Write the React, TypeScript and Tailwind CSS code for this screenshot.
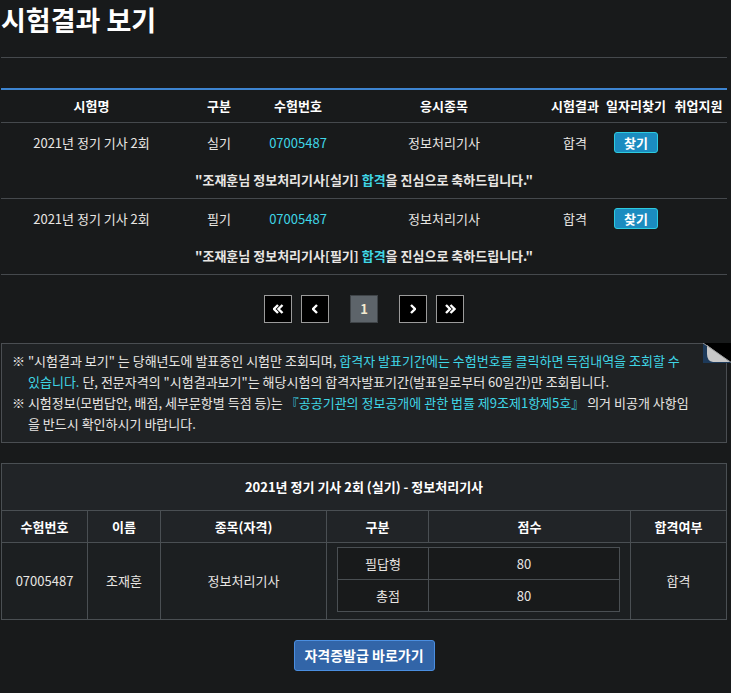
import React from "react";

const CYAN = "text-[#3fd6e6]";

function Chevron({ dir, double }: { dir: "l" | "r"; double?: boolean }) {
  const one = (x: number) =>
    dir === "l"
      ? `${x + 4},1 ${x},5 ${x + 4},9`
      : `${x},1 ${x + 4},5 ${x},9`;
  return (
    <svg width={double ? 11 : 6} height="10" viewBox={double ? "0 0 11 10" : "0 0 6 10"}>
      <polyline points={one(1)} fill="none" stroke="#fff" strokeWidth="2.4" />
      {double && <polyline points={one(5.5)} fill="none" stroke="#fff" strokeWidth="2.4" />}
    </svg>
  );
}

function PageBox({ children }: { children: React.ReactNode }) {
  return (
    <div className="w-[28px] h-[28px] border border-[#9b9b9b] bg-black flex items-center justify-center">
      {children}
    </div>
  );
}

const mainCols = "grid grid-cols-[181px_74px_84px_208px_54px_68px_57px]";

function ExamRow({ kind }: { kind: string }) {
  return (
    <div className="border-b border-[#45494d]">
      <div className={`${mainCols} h-[39px] items-center text-center text-[13px]`}>
        <div>2021년 정기 기사 2회</div>
        <div>{kind}</div>
        <div className={CYAN}>07005487</div>
        <div>정보처리기사</div>
        <div>합격</div>
        <div className="flex justify-center">
          <button className="w-[44px] h-[21px] rounded-[3px] bg-[#1b8cc0] border border-[#2ccbe0] text-white font-bold text-[13px] leading-none">
            찾기
          </button>
        </div>
        <div></div>
      </div>
      <div className="h-[36px] flex items-center justify-center text-[13px] font-bold whitespace-pre">
        {`"조재훈님 정보처리기사[${kind}] `}
        <span className={CYAN}>합격</span>
        {`을 진심으로 축하드립니다."`}
      </div>
    </div>
  );
}

export default function App() {
  return (
    <div
      className="min-h-[693px] bg-[#181a1b] text-[#e8e6e3] pb-[20px]"
      style={{ fontFamily: '"Noto Sans CJK KR", "Noto Sans", sans-serif' }}
    >
      <div className="ml-[1px] w-[726px]">
        {/* title */}
        <div className="h-[58px] border-b border-[#45494d]">
          <h1 className="text-[27px] font-bold text-white leading-[40px]">시험결과 보기</h1>
        </div>

        {/* main table */}
        <div className="mt-[30px] border-t-2 border-[#3d84d0]">
          <div className={`${mainCols} h-[33px] items-center text-center text-[13px] font-bold text-white border-b border-[#45494d]`}>
            <div>시험명</div>
            <div>구분</div>
            <div>수험번호</div>
            <div>응시종목</div>
            <div>시험결과</div>
            <div>일자리찾기</div>
            <div>취업지원</div>
          </div>
          <ExamRow kind="실기" />
          <ExamRow kind="필기" />
        </div>

        {/* pagination */}
        <div className="mt-[20px] flex justify-center items-center">
          <PageBox><Chevron dir="l" double /></PageBox>
          <div className="ml-[9px]">
            <PageBox><Chevron dir="l" /></PageBox>
          </div>
          <div className="mx-[21px] w-[28px] h-[28px] bg-[#5d646a] border border-[#3f4448] flex items-center justify-center text-[13px] font-bold text-[#f3ead0]">
            1
          </div>
          <PageBox><Chevron dir="r" /></PageBox>
          <div className="ml-[9px]">
            <PageBox><Chevron dir="r" double /></PageBox>
          </div>
        </div>

        {/* notice */}
        <div className="relative mt-[20px] border border-[#4a4e52] bg-[#1f2224] pl-[10px] pr-[14px] pt-[6px] pb-[8px] text-[13px] leading-[21px]">
          <p className="pl-[16px] -indent-[16px]">
            ※ "시험결과 보기" 는 당해년도에 발표중인 시험만 조회되며,{" "}
            <span className={CYAN}>
              합격자 발표기간에는 수험번호를 클릭하면 득점내역을 조회할 수<br />있습니다.
            </span>{" "}
            단, 전문자격의 "시험결과보기"는 해당시험의 합격자발표기간(발표일로부터 60일간)만 조회됩니다.
          </p>
          <p className="pl-[16px] -indent-[16px]">
            ※ 시험정보(모범답안, 배점, 세부문항별 득점 등)는{" "}
            <span className={CYAN}>『공공기관의 정보공개에 관한 법률 제9조제1항제5호』</span> 의거 비공개 사항임
            <br />을 반드시 확인하시기 바랍니다.
          </p>
          <svg className="absolute top-[-1px] right-[-6px]" width="29" height="20" viewBox="0 0 29 20">
            <rect width="29" height="20" fill="#000" />
            <polygon points="0,0 29,20 0,20" fill="#1d3a5a" />
            <path d="M4,2 L27,19 L10,19 Q4,18 4,11 Z" fill="#c8c8c8" />
            <line x1="0" y1="0" x2="29" y2="20" stroke="#9a9a9a" strokeWidth="1" />
          </svg>
        </div>

        {/* result table */}
        <div className="mt-[20px] border border-[#4a4f53] bg-[#4a4f53] grid grid-cols-[85px_72px_165px_101px_201px_95px] gap-px text-[13px] text-center">
          <div className="col-span-6 h-[46px] bg-[#212427] flex items-center justify-center font-bold text-white">
            2021년 정기 기사 2회 (실기) - 정보처리기사
          </div>
          {["수험번호", "이름", "종목(자격)", "구분", "점수", "합격여부"].map((h) => (
            <div key={h} className="h-[31px] bg-[#212427] flex items-center justify-center font-bold text-white">
              {h}
            </div>
          ))}
          <div className="h-[76px] bg-[#1c1f21] flex items-center justify-center">07005487</div>
          <div className="bg-[#1c1f21] flex items-center justify-center">조재훈</div>
          <div className="bg-[#1c1f21] flex items-center justify-center">정보처리기사</div>
          <div className="col-span-2 bg-[#1c1f21] pl-[10px] pr-[10px] pt-[4px]">
            <div className="w-[283px] border border-[#4a4f53] bg-[#4a4f53] grid grid-cols-[90px_190px] gap-px">
              <div className="h-[31px] bg-[#181a1b] flex items-center justify-center">필답형</div>
              <div className="bg-[#181a1b] flex items-center justify-center">80</div>
              <div className="h-[31px] bg-[#181a1b] flex items-center justify-center pl-[10px]">총점</div>
              <div className="bg-[#181a1b] flex items-center justify-center">80</div>
            </div>
          </div>
          <div className="bg-[#1c1f21] flex items-center justify-center">합격</div>
        </div>

        {/* button */}
        <div className="mt-[20px] flex justify-center">
          <button className="w-[141px] h-[31px] rounded-[3px] bg-[#3265a8] border border-[#4a8ee0] text-white font-bold text-[14px]">
            자격증발급 바로가기
          </button>
        </div>
      </div>
    </div>
  );
}
